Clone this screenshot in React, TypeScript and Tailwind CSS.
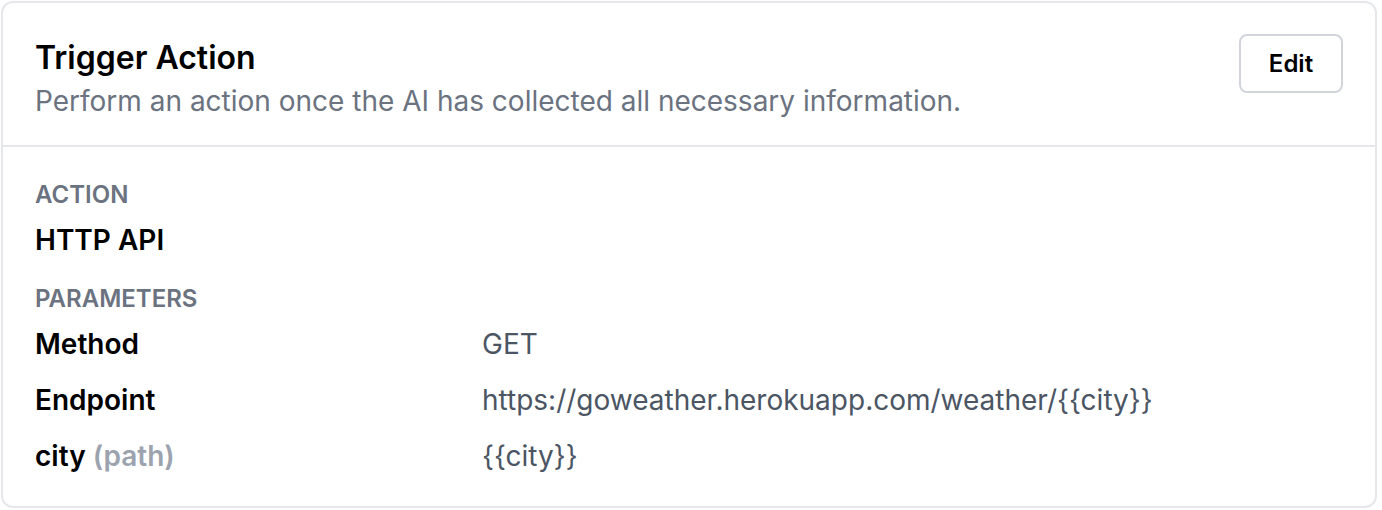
import React from "react";

export default function App() {
  const rows: { label: string; hint?: string; value: string }[] = [
    { label: "Method", value: "GET" },
    { label: "Endpoint", value: "https://goweather.herokuapp.com/weather/{{city}}" },
    { label: "city", hint: "(path)", value: "{{city}}" },
  ];
  return (
    <div className="w-[1382px] h-[510px] bg-white pl-px pt-px" style={{ fontFamily: "Inter, 'Noto Sans', sans-serif" }}>
      <div className="w-[1376px] h-[507px] border-2 border-[#e5e7eb] rounded-[12px] flex flex-col">
        <div className="flex items-start justify-between px-[32px] pt-[31px] pb-[26px] border-b-2 border-[#e5e7eb]">
          <div className="mt-[4px]">
            <div className="text-[32px] leading-[40px] font-semibold text-black">Trigger Action</div>
            <div className="mt-[5px] text-[28px] leading-[36px] text-[#6b7280]">
              Perform an action once the AI has collected all necessary information.
            </div>
          </div>
          <button className="w-[104px] h-[59px] border-2 border-[#d1d5db] rounded-[8px] text-[24px] font-semibold text-black bg-white">
            Edit
          </button>
        </div>
        <div className="px-[32px] pt-[32px] flex flex-col">
          <div className="text-[24px] leading-[32px] font-semibold text-[#6b7280] uppercase">Action</div>
          <div className="mt-[11px] text-[28px] leading-[36px] font-semibold text-black">HTTP API</div>
          <div className="mt-[25px] text-[24px] leading-[32px] font-semibold text-[#6b7280] uppercase">Parameters</div>
          <div className="mt-[11px] grid grid-cols-[447px_1fr] gap-y-[20px]">
            {rows.map((r) => (
              <React.Fragment key={r.label}>
                <div className="text-[28px] leading-[36px] font-semibold text-black">
                  {r.label}
                  {r.hint && <span className="text-[#9ca3af]"> {r.hint}</span>}
                </div>
                <div className="text-[28px] leading-[36px] text-[#4b5563]">{r.value}</div>
              </React.Fragment>
            ))}
          </div>
        </div>
      </div>
    </div>
  );
}
